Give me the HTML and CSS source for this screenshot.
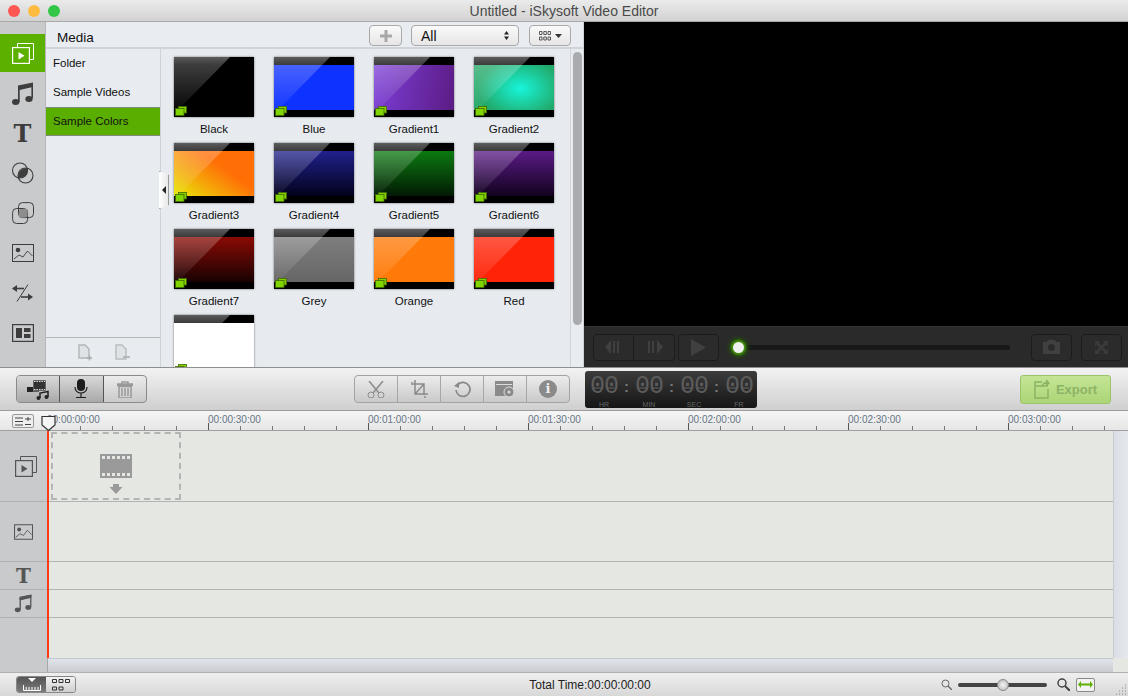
FILE: index.html
```html
<!DOCTYPE html>
<html lang="en">
<head>
<meta charset="utf-8">
<title>Untitled - iSkysoft Video Editor</title>
<link rel="stylesheet" href="styles.css">
</head>
<body>
<svg class="defs" width="0" height="0">
  <symbol id="badge" viewBox="0 0 12 10">
    <rect x="3.500" y=".5" width="8" height="6.500" fill="#86d000" stroke="#3f6a00" stroke-width=".8"/>
    <rect x=".5" y="2.500" width="8.500" height="7" fill="#80d400" stroke="#3f6a00" stroke-width=".8"/>
  </symbol>
  <symbol id="media" viewBox="0 0 22 21">
    <path d="M5.500.5h16v16H17" fill="none" stroke="currentColor" stroke-width="1"/>
    <path d="M5.500 4V.5" fill="none" stroke="currentColor" stroke-width="1"/>
    <rect x=".6" y="4.600" width="16.800" height="15.800" fill="none" stroke="currentColor" stroke-width="1.200"/>
    <path d="M6.500 9v7.500l6-3.750z" fill="currentColor"/>
  </symbol>
  <symbol id="note" viewBox="0 0 24 24">
    <path d="M7 4.500 22 1v15h-1.600V5.200L8.700 8v12H7z" fill="currentColor"/>
    <path d="M7 3.500 22 .5v4L7 7.500z" fill="currentColor"/>
    <ellipse cx="4.700" cy="20" rx="3.700" ry="3" fill="currentColor"/>
    <ellipse cx="18" cy="17" rx="3.700" ry="3" fill="currentColor"/>
  </symbol>
</svg>

<header class="titlebar">
  <div class="lights"><i class="light red"></i><i class="light amber"></i><i class="light green"></i></div>
  <div class="title">Untitled - iSkysoft Video Editor</div>
</header>

<main class="top">
  <nav class="rail">
    <div class="rail-item active"><svg width="22" height="21"><use href="#media"/></svg></div>
    <div class="rail-item"><svg width="24" height="24"><use href="#note"/></svg></div>
    <div class="rail-item"><span class="t-icon">T</span></div>
    <div class="rail-item"><svg width="24" height="24" viewBox="0 0 24 24"><circle cx="9" cy="9.500" r="7.500" fill="none" stroke="#3d3d3d" stroke-width="1.100"/><circle cx="14.500" cy="14.500" r="7.500" fill="none" stroke="#3d3d3d" stroke-width="1.100"/><path d="M7 15.500C7 11 11 7 16 7c.4 0 .8.500.9 1.500C17 13 13 17 8 17c-.7 0-1-.6-1-1.500z" fill="#3d3d3d"/></svg></div>
    <div class="rail-item"><svg width="22" height="22" viewBox="0 0 22 22"><rect x="6.500" y=".6" width="15" height="15" rx="4" fill="none" stroke="#3d3d3d" stroke-width="1"/><rect x=".6" y="6.500" width="15" height="15" rx="4" fill="none" stroke="#3d3d3d" stroke-width="1"/><path d="M7 9a2 2 0 0 1 2-2h6.500v6.500a2 2 0 0 1-2 2H7z" fill="#8d8d8d"/></svg></div>
    <div class="rail-item"><svg width="22" height="18" viewBox="0 0 22 18"><rect x=".5" y=".5" width="21" height="17" fill="none" stroke="#3d3d3d"/><circle cx="6" cy="6" r="2.300" fill="#3d3d3d"/><path d="M2 15l5-4 4 2 4.500-6 5 5" fill="none" stroke="#3d3d3d" stroke-width=".9"/></svg></div>
    <div class="rail-item"><svg width="21" height="18" viewBox="0 0 21 18"><path d="M5 17.500 16 .5" stroke="#3d3d3d" fill="none"/><path d="M1 4.500h11" stroke="#3d3d3d" stroke-width="1.600"/><path d="M5 1 0 4.500 5 8z" fill="#3d3d3d"/><path d="M9 13h11" stroke="#3d3d3d" stroke-width="1.600"/><path d="M16 9.500l5 3.500-5 3.500z" fill="#3d3d3d"/></svg></div>
    <div class="rail-item"><svg width="22" height="18" viewBox="0 0 22 18"><rect x=".6" y=".6" width="20.800" height="16.800" fill="none" stroke="#3d3d3d" stroke-width="1.200"/><rect x="4" y="4" width="6" height="10" fill="#3d3d3d"/><rect x="12" y="4" width="6.500" height="4" fill="#3d3d3d"/><rect x="12" y="10" width="6.500" height="4" fill="#3d3d3d"/></svg></div>
  </nav>

  <section class="media">
    <div class="media-head">
      <div class="media-title">Media</div>
      <button class="mac-btn plus-btn"><svg width="14" height="14" viewBox="0 0 14 14"><path d="M5.500 1h3v4.500H13v3H8.500V13h-3V8.500H1v-3h4.500z" fill="#a8a8a8"/></svg></button>
      <div class="mac-btn select"><span>All</span><svg width="5" height="9" viewBox="0 0 5 9"><path d="M2.500 0 5 3.500H0zM2.500 9 0 5.500h5z" fill="#222"/></svg></div>
      <button class="mac-btn view-btn"><svg width="12" height="10" viewBox="0 0 12 10"><path d="M.5.500h2.500v3H.5zM4.800.5h2.500v3H4.800zM9 .5h2.500v3H9zM.5 6h2.500v3H.5zM4.800 6h2.500v3H4.800zM9 6h2.500v3H9z" fill="none" stroke="#333" stroke-width=".8"/></svg><svg width="7" height="4" viewBox="0 0 7 4"><path d="M0 0h7L3.500 4z" fill="#333"/></svg></button>
    </div>
    <div class="media-body">
      <aside class="folders">
        <ul class="folder-list">
          <li class="folder">Folder</li>
          <li class="folder">Sample Videos</li>
          <li class="folder selected">Sample Colors</li>
        </ul>
        <div class="folder-foot">
          <svg width="14" height="17" viewBox="0 0 14 17"><path d="M1 1h6l4 4v9H1z" fill="#dfe2e6" stroke="#b2b4b6" stroke-width="1.400"/><path d="M9 14h5M11.500 11.500v5" stroke="#a9abad" stroke-width="1.500"/></svg>
          <svg width="15" height="17" viewBox="0 0 15 17"><path d="M1 1h6l4 4v10H1z" fill="#dfe2e6" stroke="#b9bbbd" stroke-width="1.400"/><path d="M8 13h7" stroke="#a9abad" stroke-width="1.500"/></svg>
        </div>
      </aside>
      <div class="grid-wrap">
        <div class="grid">
          <figure class="item"><div class="thumb"><div class="fill c-black"></div><i class="gloss"></i><svg class="badge"><use href="#badge"/></svg></div><figcaption>Black</figcaption></figure>
          <figure class="item"><div class="thumb"><div class="fill c-blue"></div><i class="gloss"></i><svg class="badge"><use href="#badge"/></svg></div><figcaption>Blue</figcaption></figure>
          <figure class="item"><div class="thumb"><div class="fill c-g1"></div><i class="gloss"></i><svg class="badge"><use href="#badge"/></svg></div><figcaption>Gradient1</figcaption></figure>
          <figure class="item"><div class="thumb"><div class="fill c-g2"></div><i class="gloss"></i><svg class="badge"><use href="#badge"/></svg></div><figcaption>Gradient2</figcaption></figure>
          <figure class="item"><div class="thumb"><div class="fill c-g3"></div><i class="gloss"></i><svg class="badge"><use href="#badge"/></svg></div><figcaption>Gradient3</figcaption></figure>
          <figure class="item"><div class="thumb"><div class="fill c-g4"></div><i class="gloss"></i><svg class="badge"><use href="#badge"/></svg></div><figcaption>Gradient4</figcaption></figure>
          <figure class="item"><div class="thumb"><div class="fill c-g5"></div><i class="gloss"></i><svg class="badge"><use href="#badge"/></svg></div><figcaption>Gradient5</figcaption></figure>
          <figure class="item"><div class="thumb"><div class="fill c-g6"></div><i class="gloss"></i><svg class="badge"><use href="#badge"/></svg></div><figcaption>Gradient6</figcaption></figure>
          <figure class="item"><div class="thumb"><div class="fill c-g7"></div><i class="gloss"></i><svg class="badge"><use href="#badge"/></svg></div><figcaption>Gradient7</figcaption></figure>
          <figure class="item"><div class="thumb"><div class="fill c-grey"></div><i class="gloss"></i><svg class="badge"><use href="#badge"/></svg></div><figcaption>Grey</figcaption></figure>
          <figure class="item"><div class="thumb"><div class="fill c-orange"></div><i class="gloss"></i><svg class="badge"><use href="#badge"/></svg></div><figcaption>Orange</figcaption></figure>
          <figure class="item"><div class="thumb"><div class="fill c-red"></div><i class="gloss"></i><svg class="badge"><use href="#badge"/></svg></div><figcaption>Red</figcaption></figure>
          <figure class="item"><div class="thumb"><div class="fill c-white"></div><i class="gloss"></i><svg class="badge"><use href="#badge"/></svg></div></figure>
        </div>
      </div>
      <div class="vscroll"><div class="vthumb"></div></div>
      <div class="collapse"><svg width="4" height="8" viewBox="0 0 4 8"><path d="M4 0v8L0 4z" fill="#222"/></svg></div>
    </div>
  </section>

  <section class="preview">
    <div class="screen"></div>
    <div class="player">
      <div class="p-group">
        <button class="p-btn p-w40"><svg width="17" height="14" viewBox="0 0 17 14"><path d="M6 0v14L0 7zM8 1h2v12H8zM12 1h2v12h-2z" fill="#404040"/></svg></button>
        <button class="p-btn p-w40"><svg width="17" height="14" viewBox="0 0 17 14"><path d="M11 0v14l6-7zM2 1h2v12H2zM6 1h2v12H6z" fill="#404040"/></svg></button>
      </div>
      <button class="p-btn p-play"><svg width="15" height="17" viewBox="0 0 15 17"><path d="M0 0v17l15-8.500z" fill="#404040"/></svg></button>
      <div class="scrub"><i class="scrub-knob"></i></div>
      <button class="p-btn p-side"><svg width="17" height="14" viewBox="0 0 17 14"><path fill-rule="evenodd" d="M0 2h4l1-2h7l1 2h4v12H0zM8.500 4a3.500 3.500 0 1 0 0 7 3.500 3.500 0 0 0 0-7z" fill="#404040"/></svg></button>
      <button class="p-btn p-side p-last"><svg width="13" height="13" viewBox="0 0 13 13"><path d="M0 0h5L3.500 1.500l3 3 3-3L8 0h5v5l-1.500-1.500-3 3 3 3L13 8v5H8l1.500-1.500-3-3-3 3L5 13H0V8l1.500 1.500 3-3-3-3L0 5z" fill="#3a3a3a"/></svg></button>
    </div>
  </section>
</main>

<section class="toolbar">
  <div class="seg seg-left">
    <button class="seg-cell dark"><svg width="22" height="21" viewBox="0 0 22 21"><path d="M0 9h7V2h12v9h-7v2H0z" fill="#2a2a2a"/><path d="M6 1h13v11H6z" fill="#333" stroke="#d8d8d8" stroke-width=".6"/><path d="M7 2.500h11M7 10.500h11" stroke="#ddd" stroke-dasharray="1.500 1"/><path d="M11 12h-11v-4h6v4z" fill="#222"/><path d="M13 19V14l8-1.500v5.500" fill="none" stroke="#222" stroke-width="1.500"/><circle cx="11.500" cy="19" r="2" fill="#222"/><circle cx="19.500" cy="18" r="2" fill="#222"/></svg></button>
    <button class="seg-cell dark"><svg width="14" height="20" viewBox="0 0 14 20"><rect x="3" y="0" width="8" height="12" rx="4" fill="#1d1d1d"/><path d="M1 8c0 8 12 8 12 0M7 14v4M2 18.500h10" fill="none" stroke="#1d1d1d" stroke-width="1.200"/></svg></button>
    <button class="seg-cell"><svg width="16" height="17" viewBox="0 0 16 17"><path d="M0 3h16v1.500H0zM5 3V1h6v2M2 5.500h12V17H2zM5 7v8M8 7v8M11 7v8" fill="none" stroke="#999" stroke-width="1.500"/></svg></button>
  </div>
  <div class="seg seg-mid">
    <button class="seg-cell"><svg width="18" height="17" viewBox="0 0 18 17"><path d="M2 0l10 12M16 0 6 12" stroke="#8e8e8e" stroke-width="1.600" fill="none"/><circle cx="4" cy="14" r="3" fill="none" stroke="#8e8e8e"/><circle cx="14" cy="14" r="3" fill="none" stroke="#8e8e8e"/></svg></button>
    <button class="seg-cell"><svg width="17" height="18" viewBox="0 0 17 18"><path d="M0 4h13v11M4 0v14h13M13 4 4 14M1 2v1M14 16v2" fill="none" stroke="#8a8a8a" stroke-width="1.500"/></svg></button>
    <button class="seg-cell"><svg width="17" height="17" viewBox="0 0 17 17"><path d="M4 3.500A7 7 0 1 1 2 9" fill="none" stroke="#8a8a8a" stroke-width="1.800"/><path d="M0 5l5-4v6z" fill="#8a8a8a"/></svg></button>
    <button class="seg-cell"><svg width="20" height="17" viewBox="0 0 20 17"><path d="M0 0h18v15H0z" fill="#8a8a8a"/><path d="M1 3h16v1H1z" fill="#ddd"/><circle cx="14" cy="11" r="5" fill="#8a8a8a" stroke="#ddd"/><circle cx="14" cy="11" r="1.500" fill="#ddd"/></svg></button>
    <button class="seg-cell"><span class="info">i</span></button>
  </div>
  <div class="timecode">
    <div class="tc-row"><span class="tc-d">00</span><span class="tc-c">:</span><span class="tc-d">00</span><span class="tc-c">:</span><span class="tc-d">00</span><span class="tc-c">:</span><span class="tc-d">00</span></div>
    <div class="tc-labels"><span>HR</span><span>MIN</span><span>SEC</span><span>FR</span></div>
  </div>
  <button class="export"><svg width="16" height="20" viewBox="0 0 16 20"><path d="M8 3H1v16h13v-9M1 7h13" fill="none" stroke="#8db366" stroke-width="1.500"/><path d="M7 9c0-4 3-6 5-6V0l4 4-4 4V5C10 5 8 6 7 9z" fill="#8db366"/></svg><span>Export</span></button>
</section>

<section class="ruler">
  <button class="ruler-btn"><svg width="16" height="9" viewBox="0 0 16 9"><path d="M0 1h8M0 4.500h8M0 8h8M10 2h6M13 0v4M10 7.500h6" stroke="#444" fill="none"/></svg></button>
  <div class="scale">
    <span class="tick-label first">00:00:00:00</span>
    <span class="tick-label">00:00:30:00</span>
    <span class="tick-label">00:01:00:00</span>
    <span class="tick-label">00:01:30:00</span>
    <span class="tick-label">00:02:00:00</span>
    <span class="tick-label">00:02:30:00</span>
    <span class="tick-label">00:03:00:00</span>
  </div>
  <svg class="playhead" width="15" height="16" viewBox="0 0 15 16"><path d="M1 1.500h13v8.500L7.500 15.500 1 10z" fill="#f4f4f4" stroke="#333" stroke-width="1.200"/></svg>
</section>

<section class="tracks">
  <div class="track-area">
    <div class="track t1">
      <div class="track-head shift"><svg width="22" height="21"><use href="#media" style="color:#555"/></svg></div>
      <div class="track-lane">
        <div class="drop"><svg width="32" height="40" viewBox="0 0 32 40"><path fill-rule="evenodd" d="M0 0h32v24H0zM2 2v3h3V2zM7 2v3h3V2zM12 2v3h3V2zM17 2v3h3V2zM22 2v3h3V2zM27 2v3h3V2zM2 19v3h3v-3zM7 19v3h3v-3zM12 19v3h3v-3zM17 19v3h3v-3zM22 19v3h3v-3zM27 19v3h3v-3z" fill="#9a9a9a"/><path d="M13 30h6v3h3.500L16 40l-6.500-7H13z" fill="#9a9a9a"/></svg></div>
      </div>
    </div>
    <div class="track t2">
      <div class="track-head"><svg width="19" height="16" viewBox="0 0 22 18"><rect x=".6" y=".6" width="20.800" height="16.800" fill="none" stroke="#555" stroke-width="1.200"/><circle cx="6" cy="6" r="2.300" fill="#555"/><path d="M2 15l5-4 4 2 4.500-6 5 5" fill="none" stroke="#555"/></svg></div>
      <div class="track-lane"></div>
    </div>
    <div class="track t3">
      <div class="track-head"><span class="t-icon small">T</span></div>
      <div class="track-lane"></div>
    </div>
    <div class="track t4">
      <div class="track-head"><svg width="19" height="21"><use href="#note" style="color:#555"/></svg></div>
      <div class="track-lane"></div>
    </div>
    <div class="track t5">
      <div class="track-head"></div>
      <div class="track-lane"></div>
    </div>
    <i class="redline"></i>
  </div>
  <div class="vbar"></div>
</section>

<section class="hbar"><div class="hbar-head"></div><div class="hbar-track"></div></section>

<footer class="status">
  <div class="view-toggle">
    <button class="vt vt-on"><svg width="18" height="13" viewBox="0 0 18 13"><path d="M5 0h8L9 4z" fill="#fff"/><path d="M.5 7v5.500h17V7M6 9v3M12 9v3M3.200 9v3M9 9v3M15 9v3" stroke="#fff" fill="none"/></svg></button>
    <button class="vt"><svg width="18" height="12" viewBox="0 0 18 12"><path d="M.5.500h4v3h-4zM7 .5h4v3H7zM13.500.5h4v3h-4zM.5 8h4v3h-4zM7 8h4v3H7z" fill="none" stroke="#333"/></svg></button>
  </div>
  <div class="total">Total Time:00:00:00:00</div>
  <div class="zoomer">
    <svg width="11" height="11" viewBox="0 0 11 11"><circle cx="4.500" cy="4.500" r="3.500" fill="none" stroke="#666"/><path d="M7 7l4 4" stroke="#666" stroke-width="1.300"/></svg>
    <div class="zslider"><i class="zknob"></i></div>
    <svg width="13" height="13" viewBox="0 0 13 13"><circle cx="5" cy="5" r="4" fill="none" stroke="#444" stroke-width="1.500"/><path d="M8 8l5 5" stroke="#444" stroke-width="2"/></svg>
    <button class="fit"><svg width="15" height="7" viewBox="0 0 15 7"><path d="M0 3.500 3 0v2.500h9V0l3 3.500L12 7V4.500H3V7z" fill="#5eb000"/></svg></button>
  </div>
  <svg class="grip" width="12" height="11" viewBox="0 0 12 11"><path d="M10 1h1M7 4h1M10 4h1M4 7h1M7 7h1M10 7h1M1 10h1M4 10h1M7 10h1M10 10h1" stroke="#888"/></svg>
</footer>
</body>
</html>
```
FILE: styles.css
```css
* { box-sizing: border-box; }
html, body { margin: 0; padding: 0; }
body {
  width: 1128px; height: 696px; overflow: hidden;
  display: flex; flex-direction: column;
  font-family: "Liberation Sans", Arial, sans-serif;
  background: #d9d9d9; color: #111;
}
button { font: inherit; padding: 0; margin: 0; background: none; border: 0; }
svg { display: block; }
.defs { position: absolute; }

/* title bar */
.titlebar {
  height: 22px; flex: none; display: flex; align-items: center; position: relative;
  background: linear-gradient(#ebebeb, #d2d2d2); border-bottom: 1px solid #a9a9a9;
}
.lights { display: flex; gap: 8px; padding-left: 8px; }
.light { width: 12px; height: 12px; border-radius: 50%; }
.light.red { background: #fc5753; }
.light.amber { background: #fdbc40; }
.light.green { background: #33c748; }
.title { position: absolute; left: 0; right: 0; text-align: center; font-size: 14px; color: #4a4a4a; }

/* top area */
.top { height: 345px; flex: none; display: flex; }
.rail { width: 46px; flex: none; background: #c9cacc; padding-top: 12px; border-right: 1px solid #b5b6b8; }
.rail-item { height: 39.800px; display: flex; align-items: center; justify-content: center; color: #3d3d3d; }
.rail-item.active { height: 38px; background: #5bb000; color: #fff; margin-bottom: 2px; }
.t-icon { font: bold 24px/1 "DejaVu Serif", serif; color: #3d3d3d; }
.t-icon.small { font-size: 20px; color: #555; }

.media { width: 538px; flex: none; display: flex; flex-direction: column; background: #e7ebf0; border-right: 1px solid #cfd2d6; }
.media-head {
  height: 27px; flex: none; display: flex; align-items: center; padding: 2px 12px 0 0;
  background: #e9edf2; border-bottom: 2px solid #d0d3d7;
}
.media-title { font-size: 13.500px; margin-left: 11px; margin-right: auto; padding-top: 3px; }
.mac-btn {
  height: 21px; border: 1px solid #a9a9a9; border-radius: 4px;
  background: linear-gradient(#fafafa, #e6e6e6);
  display: flex; align-items: center; justify-content: center;
}
.plus-btn { width: 33px; margin-right: 9px; }
.select { width: 108px; margin-right: 10px; justify-content: space-between; padding: 0 9px; font-size: 14px; }
.view-btn { width: 42px; gap: 4px; }

.media-body { flex: 1; display: flex; min-height: 0; position: relative; }
.folders { width: 115px; flex: none; display: flex; flex-direction: column; border-right: 1px solid #cfd2d6; background: #e8ecf1; }
.folder-list { list-style: none; margin: 0; padding: 0; flex: 1; }
.folder { height: 29px; padding: 0 0 2px 7px; display: flex; align-items: center; font-size: 11.500px; color: #111; }
.folder.selected { background: #5aae00; border-top: 1px solid #7f8a80; border-bottom: 1px solid #7f8a80; }
.folder-foot { height: 30px; flex: none; border-top: 1px solid #b4b6b8; display: flex; align-items: center; padding-left: 32px; gap: 23px; }

.grid-wrap { width: 409px; flex: none; overflow: hidden; padding: 8px 0 0 13px; }
.grid { display: grid; grid-template-columns: repeat(4, 100px); grid-auto-rows: 86px; }
.item { margin: 0; width: 80px; }
.item figcaption { font-size: 11.500px; text-align: center; margin-top: 6px; white-space: nowrap; line-height: 13px; color: #111; }
.thumb { width: 80px; height: 60px; position: relative; overflow: hidden; background: #000; box-shadow: 0 0 2px rgba(0,0,0,.55); }
.fill { margin-top: 8px; height: 45px; }
.gloss {
  position: absolute; inset: 0 0 7px 0;
  background: linear-gradient(rgba(255,255,255,.36), rgba(255,255,255,.24) 14%, rgba(255,255,255,.03));
  clip-path: polygon(0 0, 56px 0, 4px 53px, 0 53px);
}
.badge { position: absolute; left: 1px; bottom: 1px; width: 12px; height: 10px; }
.c-black { background: #000; }
.c-blue { background: #0e32ff; }
.c-g1 { background: linear-gradient(100deg, #7c3ed8, #5c1c84); }
.c-g2 { background: radial-gradient(ellipse 42px 30px at 58% 52%, #17f5da, #22a868); }
.c-g3 { background: linear-gradient(35deg, #e8ea08 0, #f5a808 32%, #ff6f06 62%); }
.c-g4 { background: linear-gradient(#20208c, #02021c); }
.c-g5 { background: linear-gradient(#0c7a10, #021a04); }
.c-g6 { background: linear-gradient(#5a1a86, #12021e); }
.c-g7 { background: linear-gradient(#8a0a04, #180202); }
.c-grey { background: linear-gradient(#7e7e7e, #666); }
.c-orange { background: #ff7a08; }
.c-red { background: #ff2408; }
.c-white { background: #fff; }

.vscroll { width: 13px; flex: none; background: #e8ebef; border-left: 1px solid #d0d3d7; padding: 3px 0 0 2px; }
.vthumb { width: 9px; height: 273px; border-radius: 5px; background: #a9abae; }
.collapse {
  position: absolute; left: 113px; top: 122px; width: 10px; height: 38px;
  background: linear-gradient(90deg, #fff, #e8e8e8); border: 1px solid #9a9a9a; border-left: 0;
  clip-path: polygon(0 0, 100% 4px, 100% 34px, 0 100%);
  display: flex; align-items: center; justify-content: center;
}

.preview { flex: 1; display: flex; flex-direction: column; }
.screen { height: 305px; flex: none; background: #000; border-bottom: 1px solid #333; }
.player { flex: 1; background: #2a2a2a; display: flex; align-items: center; padding-left: 9px; }
.p-group { display: flex; }
.p-btn {
  height: 27px; border: 1px solid #1c1c1c; border-radius: 4px; background: #2b2b2b;
  display: flex; align-items: center; justify-content: center;
}
.p-w40 { width: 41px; border-radius: 0; }
.p-w40:first-child { border-radius: 4px 0 0 4px; }
.p-w40:last-child { border-radius: 0 4px 4px 0; border-left: 0; }
.p-play { width: 41px; margin-left: 3px; }
.scrub { width: 272px; height: 5px; margin: 0 21px 0 19px; background: #181818; border-radius: 2px; position: relative; }
.scrub-knob {
  position: absolute; left: -5px; top: -3px; width: 11px; height: 11px; border-radius: 50%;
  background: #f0f0f0; box-shadow: 0 0 2px 2px #44920f, 0 0 4px 4px #24500a;
}
.p-side { width: 41px; }
.p-last { margin-left: 9px; }

/* toolbar */
.toolbar {
  height: 44px; flex: none; display: flex; align-items: center;
  background: linear-gradient(#f2f2f2, #cfcfcf);
  border-top: 1px solid #8e8e8e; border-bottom: 1px solid #9a9a9a;
}
.seg { display: flex; height: 28px; border: 1px solid #a3a3a3; border-radius: 4px; overflow: hidden; background: linear-gradient(#ececec, #c9c9c9); }
.seg-cell { display: flex; align-items: center; justify-content: center; border-right: 1px solid #a6a6a6; height: 100%; }
.seg-cell:last-child { border-right: 0; }
.seg-left { margin-left: 16px; width: 131px; border-color: #8a8a8a; }
.seg-left .seg-cell { flex: 1; }
.seg-cell.dark { background: linear-gradient(#d8d8d8, #a9a9a9); border-right: 1px solid #555; }
.seg-mid { margin-left: 207px; width: 216px; }
.seg-mid .seg-cell { flex: 1; }
.info { width: 18px; height: 18px; border-radius: 50%; background: #8a8a8a; color: #eee; font: bold 13px/18px "DejaVu Serif", serif; text-align: center; display: block; }
.timecode {
  margin-left: 15px; width: 172px; height: 37px; padding: 2px 0 0 5px; border-radius: 3px;
  background: linear-gradient(#3c3c3c 0, #303030 30%, #1f1f1f 75%, #161616);
  color: #5c5c5c; overflow: hidden;
}
.tc-row { display: flex; height: 28px; align-items: center; }
.tc-d {
  width: 28px; font: 25px/28px "Liberation Mono", monospace; letter-spacing: -1px; text-align: center; white-space: nowrap;
  background-image: linear-gradient(#484848, #484848), linear-gradient(#484848, #484848);
  background-size: 7px 2px, 7px 2px;
  background-position: 4px 14px, 17px 14px;
  background-repeat: no-repeat;
}
.tc-c { width: 17px; text-align: center; font: bold 15px/28px "Liberation Sans", sans-serif; color: #777; }
.tc-labels { display: flex; font-size: 7px; line-height: 7px; color: #666; }
.tc-labels span { flex: none; width: 28px; margin-right: 17px; text-align: center; }
.export {
  margin-left: auto; margin-right: 17px; width: 91px; height: 29px;
  border: 1px solid #9cc46c; border-radius: 3px; background: linear-gradient(#c4e596, #abd576);
  display: flex; align-items: center; justify-content: center; gap: 6px;
  color: #8db366; font-size: 13px; font-weight: bold;
}

/* ruler */
.ruler {
  height: 20px; flex: none; position: relative; display: flex; align-items: flex-start;
  background-color: #f0f0f0;
  background-image:
    repeating-linear-gradient(90deg, #555 0 1px, transparent 1px 160px),
    repeating-linear-gradient(90deg, #777 0 1px, transparent 1px 32px),
    linear-gradient(#f6f6f6, #e6e6e6);
  background-position: 48px 100%, 48px 100%, 0 0;
  background-size: 100% 7px, 100% 4px, 100% 100%;
  background-repeat: no-repeat;
  border-bottom: 1px solid #9f9f9f;
}
.ruler-btn { margin: 3px 0 0 12px; width: 22px; height: 14px; border: 1px solid #9a9a9a; border-radius: 2px; background: #eee; display: flex; align-items: center; justify-content: center; flex: none; }
.scale { display: flex; margin-left: 11px; font-size: 10px; line-height: 12px; padding-top: 3px; color: #667687; }
.tick-label { width: 160px; flex: none; white-space: nowrap; padding-left: 2px; }
.tick-label.first { width: 161px; }
.playhead { position: absolute; left: 41px; top: 4px; }

/* tracks */
.tracks { height: 227px; flex: none; display: flex; }
.track-area { flex: 1; display: flex; flex-direction: column; position: relative; }
.track { display: flex; border-bottom: 1px solid #b2b4b2; }
.t1 { height: 71px; }
.t2 { height: 60px; }
.t3 { height: 28px; }
.t4 { height: 28px; }
.t5 { flex: 1; border-bottom: 0; }
.track-head { width: 48px; flex: none; background: #c9cacc; display: flex; align-items: center; justify-content: center; border-right: 1px solid #a9a9a9; }
.track-head.shift { padding-left: 4px; }
.track-lane { flex: 1; background: #e5e7e2; padding: 1px 0 0 3px; }
.drop { width: 130px; height: 68px; border: 2px dashed #b4b4b4; display: flex; align-items: flex-start; justify-content: center; padding-top: 20px; }
.redline { position: absolute; left: 47px; top: 0; bottom: 0; width: 2px; background: #ff3b16; }
.vbar { width: 15px; flex: none; background: linear-gradient(90deg, #dadde6, #e6e8ee); border-left: 1px solid #c8cbd2; }

.hbar { height: 15px; flex: none; display: flex; border-bottom: 1px solid #b0b0b0; background: #e5e7e2; }
.hbar-head { width: 48px; flex: none; background: #c9cacc; border-right: 1px solid #a9a9a9; }
.hbar-track { width: 1065px; flex: none; background: linear-gradient(#e2e4ec, #c9cbd1); border-top: 1px solid #c4c6d0; }

.status {
  flex: 1; position: relative; display: flex; align-items: center;
  background: linear-gradient(#efefef, #d8d8d8);
}
.view-toggle { margin-left: 16px; width: 60px; height: 17px; display: flex; border: 1px solid #888; border-radius: 3px; overflow: hidden; flex: none; }
.vt { flex: 1; display: flex; align-items: center; justify-content: center; background: linear-gradient(#f2f2f2, #cfcfcf); }
.vt-on { background: linear-gradient(#555, #7a7a7a); }
.total { position: absolute; left: 0; width: 1180px; text-align: center; font-size: 12px; color: #222; }
.zoomer { position: absolute; left: 941px; top: 0; bottom: 0; display: flex; align-items: center; }
.zslider { width: 89px; height: 4px; margin: 0 10px 0 6px; background: #444; border-radius: 2px; position: relative; }
.zknob { position: absolute; left: 39px; top: -4px; width: 12px; height: 12px; border-radius: 50%; background: radial-gradient(#f4f4f4, #b0b0b0); border: 1px solid #8a8a8a; }
.fit { margin-left: 6px; width: 19px; height: 14px; border: 1px solid #888; border-radius: 2px; background: #f2f2f2; display: flex; align-items: center; justify-content: center; }
.grip { position: absolute; right: 1px; bottom: 1px; }
```
